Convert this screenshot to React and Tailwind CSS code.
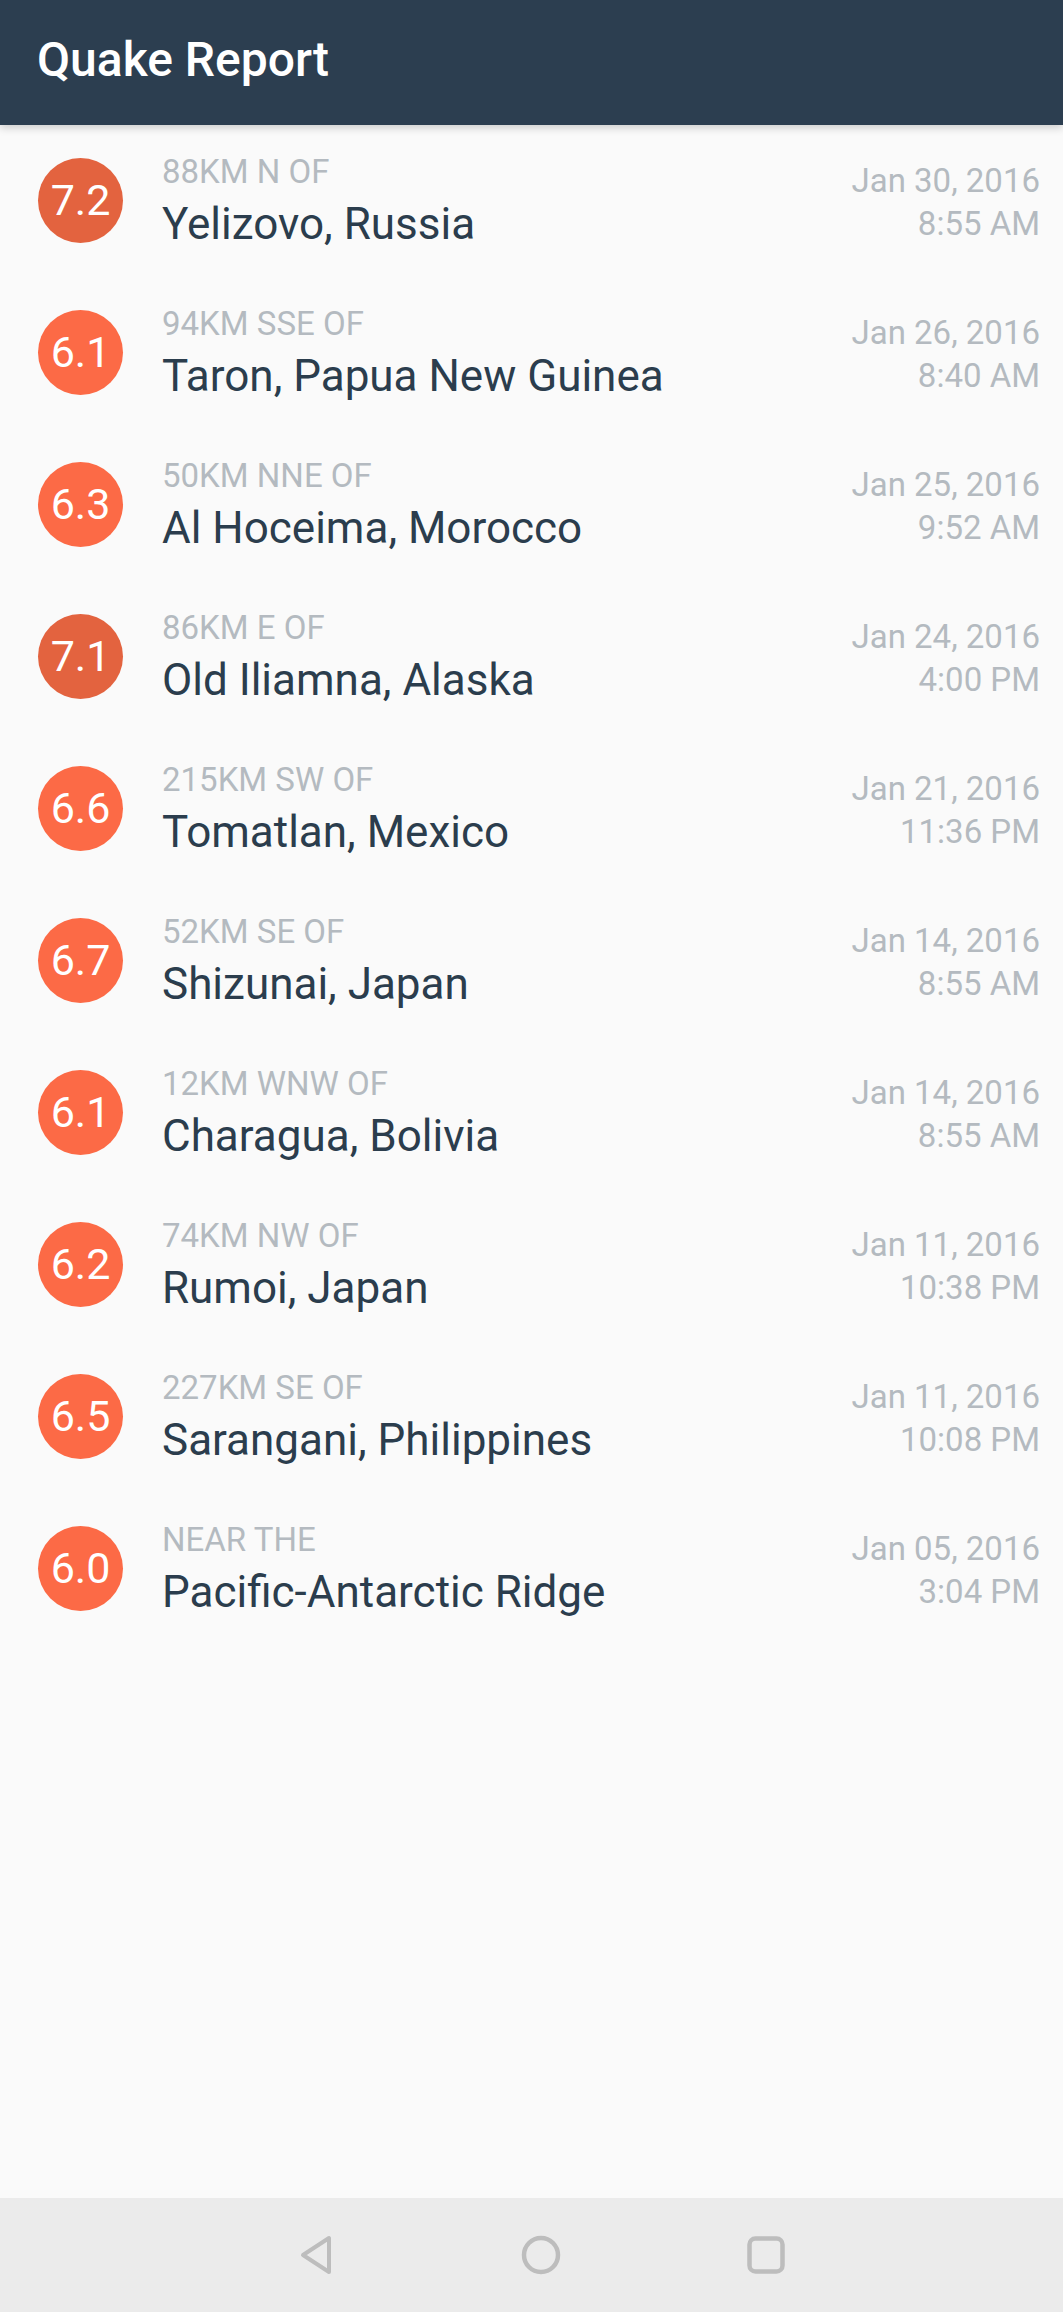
import React from "react";

const quakes = [
  { mag: "7.2", offset: "88KM N OF", place: "Yelizovo, Russia", date: "Jan 30, 2016", time: "8:55 AM" },
  { mag: "6.1", offset: "94KM SSE OF", place: "Taron, Papua New Guinea", date: "Jan 26, 2016", time: "8:40 AM" },
  { mag: "6.3", offset: "50KM NNE OF", place: "Al Hoceima, Morocco", date: "Jan 25, 2016", time: "9:52 AM" },
  { mag: "7.1", offset: "86KM E OF", place: "Old Iliamna, Alaska", date: "Jan 24, 2016", time: "4:00 PM" },
  { mag: "6.6", offset: "215KM SW OF", place: "Tomatlan, Mexico", date: "Jan 21, 2016", time: "11:36 PM" },
  { mag: "6.7", offset: "52KM SE OF", place: "Shizunai, Japan", date: "Jan 14, 2016", time: "8:55 AM" },
  { mag: "6.1", offset: "12KM WNW OF", place: "Charagua, Bolivia", date: "Jan 14, 2016", time: "8:55 AM" },
  { mag: "6.2", offset: "74KM NW OF", place: "Rumoi, Japan", date: "Jan 11, 2016", time: "10:38 PM" },
  { mag: "6.5", offset: "227KM SE OF", place: "Sarangani, Philippines", date: "Jan 11, 2016", time: "10:08 PM" },
  { mag: "6.0", offset: "NEAR THE", place: "Pacific-Antarctic Ridge", date: "Jan 05, 2016", time: "3:04 PM" },
];

function QuakeRow({ q }) {
  const strong = parseFloat(q.mag) >= 7;
  return (
    <li className="flex h-[152px] items-start">
      <div
        className={
          "ml-[38px] mt-[33px] flex h-[85px] w-[85px] shrink-0 items-center justify-center rounded-full text-[43px] leading-none text-white " +
          (strong ? "bg-[#e3633f]" : "bg-[#fc6a46]")
        }
      >
        {q.mag}
      </div>
      <div className="ml-[39px] flex-1 pt-[28px]">
        <div className="text-[33px] leading-[37px] text-[#b4bac0]">
          {q.offset}
        </div>
        <div className="mt-[9px] text-[44px] leading-[51px] text-[#2b3d4d]">
          {q.place}
        </div>
      </div>
      <div className="pr-[23px] pt-[34px] text-right text-[33px] leading-[43px] text-[#b4bac0]">
        <div>{q.date}</div>
        <div>{q.time}</div>
      </div>
    </li>
  );
}

export default function App() {
  return (
    <div className="flex h-[2312px] w-[1063px] flex-col bg-[#fafafa] font-['Roboto',sans-serif]">
      <header className="relative z-10 h-[125px] shrink-0 bg-[#2c3e50] pl-[37px] pt-[32px] shadow-[0_3px_8px_rgba(0,0,0,0.18)]">
        <h1 className="text-[48px] font-medium leading-[56px] text-white">Quake Report</h1>
      </header>

      <ul className="flex-1">
        {quakes.map((q, i) => (
          <QuakeRow key={i} q={q} />
        ))}
      </ul>

      <nav className="flex h-[114px] shrink-0 items-center bg-[#ebebeb]">
        <div className="flex w-full items-center justify-center gap-[186px] pl-[20px]">
          <svg width="36" height="40" viewBox="0 0 36 40" fill="none">
            <path
              d="M30 3 L30 37 L4 20 Z"
              stroke="#bdbdbd"
              strokeWidth="4"
              strokeLinejoin="round"
            />
          </svg>
          <svg width="40" height="40" viewBox="0 0 40 40" fill="none">
            <circle cx="20" cy="20" r="17" stroke="#bdbdbd" strokeWidth="4.5" />
          </svg>
          <svg width="38" height="38" viewBox="0 0 38 38" fill="none">
            <rect x="2.5" y="2.5" width="33" height="33" rx="6" stroke="#bdbdbd" strokeWidth="4.5" />
          </svg>
        </div>
      </nav>
    </div>
  );
}
